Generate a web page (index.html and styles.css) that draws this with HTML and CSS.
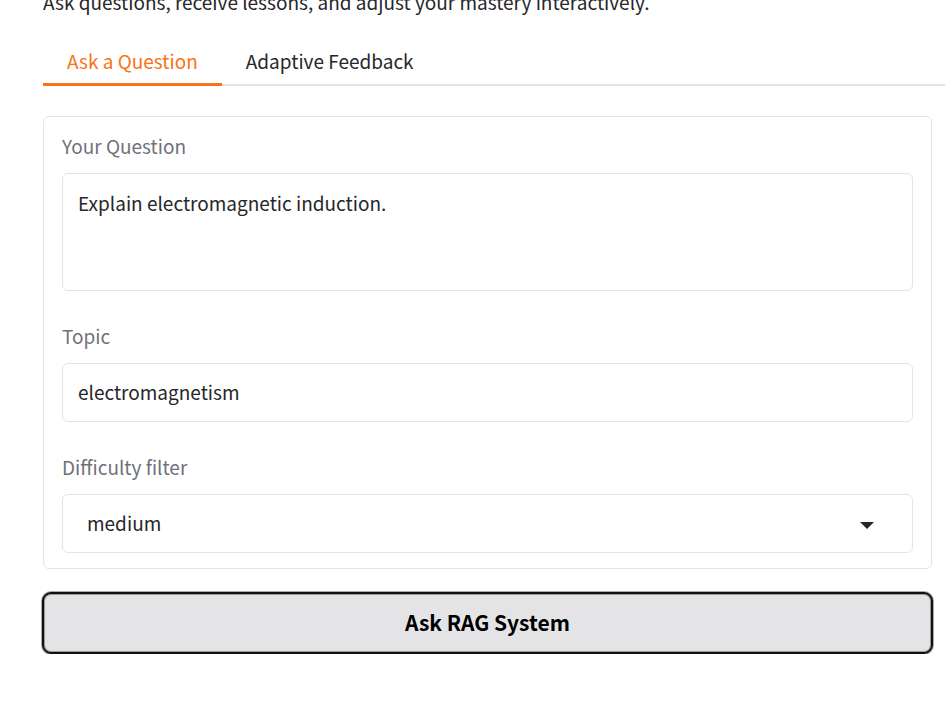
FILE: index.html
```html
<!DOCTYPE html>
<html lang="en">
<head>
<meta charset="utf-8">
<meta name="viewport" content="width=device-width, initial-scale=1">
<title>Ask a Question</title>
<link rel="stylesheet" href="styles.css">
</head>
<body>
<main class="app">
  <p class="intro">Ask questions, receive lessons, and adjust your mastery interactively.</p>
  <div class="tabs" role="tablist">
    <button class="tab tab-selected" type="button" role="tab" aria-selected="true">Ask a Question</button>
    <button class="tab" type="button" role="tab" aria-selected="false">Adaptive Feedback</button>
  </div>
  <form class="panel">
    <div class="card">
      <div class="field">
        <label for="question">Your Question</label>
        <textarea class="control control-tall" id="question">Explain electromagnetic induction.</textarea>
      </div>
      <div class="field">
        <label for="topic">Topic</label>
        <input class="control" id="topic" type="text" value="electromagnetism">
      </div>
      <div class="field">
        <label for="difficulty">Difficulty filter</label>
        <div class="select-wrap">
          <select class="control control-select" id="difficulty">
            <option>easy</option>
            <option selected>medium</option>
            <option>hard</option>
          </select>
          <svg class="caret" viewBox="0 0 14 7" aria-hidden="true"><path d="M0 0h14L7 7z"/></svg>
        </div>
      </div>
    </div>
    <button class="submit" type="button">Ask RAG System</button>
  </form>
</main>
</body>
</html>
```
FILE: styles.css
```css
* {
  box-sizing: border-box;
}

body {
  margin: 0;
  overflow: hidden;
  background: #fff;
  color: #27272a;
  font-family: "Noto Sans CJK SC", "Noto Sans", sans-serif;
  font-size: 19px;
  line-height: 28px;
}

button,
input,
select,
textarea {
  margin: 0;
  color: inherit;
  font: inherit;
}

.app {
  padding-left: 43px;
}

.intro {
  margin: -12px 0 22px;
}

.tabs {
  display: flex;
  height: 48px;
  box-shadow: inset 0 -2px #e4e4e7;
}

.tab {
  padding: 0 24px;
  border: 0;
  border-bottom: 3px solid transparent;
  background: none;
}

.tab-selected {
  border-color: #f97316;
  color: #f97316;
}

.panel {
  padding: 30px 12px 0 0;
}

.card {
  display: grid;
  gap: 31px;
  margin-right: 1px;
  padding: 15px 18px;
  border: 1px solid #e4e4e7;
  border-radius: 6px;
}

.field {
  display: grid;
  gap: 13px;
}

label {
  color: #71717a;
}

.control {
  display: block;
  width: 100%;
  height: 59px;
  padding: 0 15px 2px;
  border: 1px solid #e4e4e7;
  border-radius: 6px;
  outline: 0;
  background: #fff;
}

.control-tall {
  height: 118px;
  padding: 15px;
  resize: none;
}

.control-select {
  padding: 0 24px 2px;
  appearance: none;
}

.select-wrap {
  position: relative;
}

.caret {
  position: absolute;
  top: 28px;
  right: 39px;
  width: 14px;
  height: 7px;
  fill: #27272a;
  pointer-events: none;
}

.submit {
  display: block;
  width: calc(100% + 1px);
  height: 62px;
  margin: 23px 0 0 -1px;
  padding: 0 0 2px;
  border: 2px solid #111;
  border-radius: 9px;
  background: #e4e4e7;
  box-shadow: 0 0 0 1px #aaa, inset 0 0 0 1px #999;
  color: #000;
  font-size: 21px;
  font-weight: 600;
}
```
